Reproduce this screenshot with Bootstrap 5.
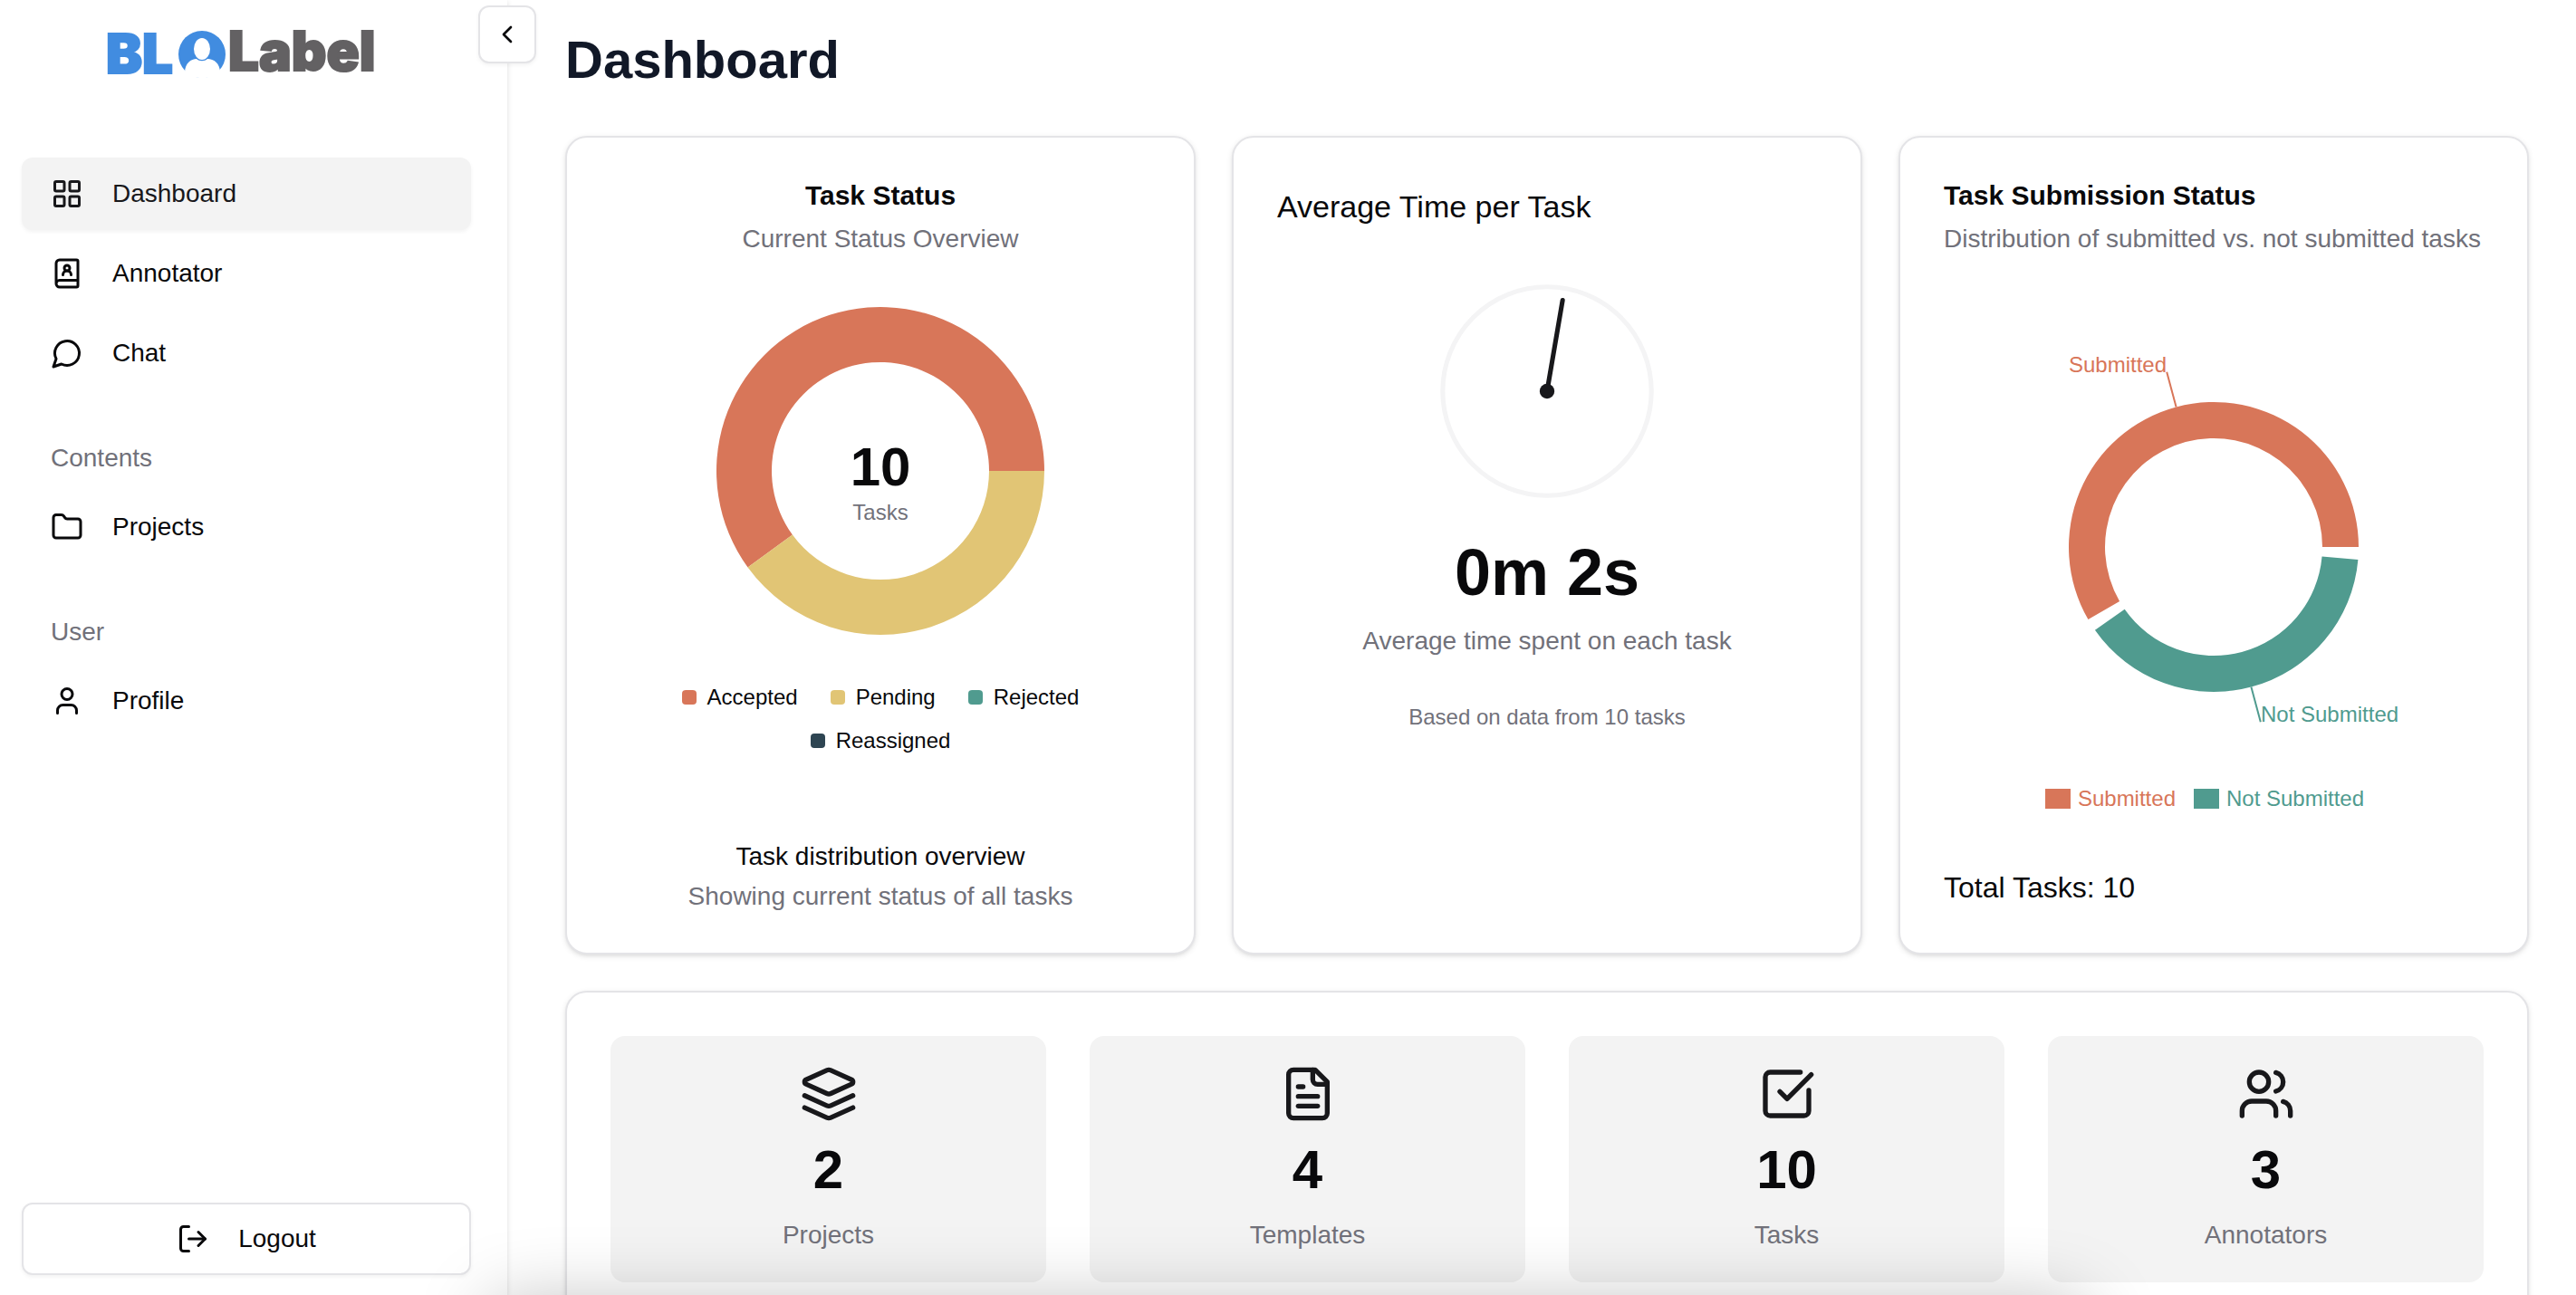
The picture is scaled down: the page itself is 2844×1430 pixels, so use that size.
<!DOCTYPE html>
<html lang="en">
<head>
<meta charset="utf-8">
<meta name="viewport" content="width=device-width, initial-scale=1">
<title>BLOLabel – Dashboard</title>
<link href="https://cdn.jsdelivr.net/npm/bootstrap@5.3.0/dist/css/bootstrap.min.css" rel="stylesheet">
<style>
  :root {
    --ink: #09090b;
    --muted: #71717a;
    --line: #e4e4e7;
    --soft: #f4f4f5;
    --coral: #d87659;
    --sand: #e1c575;
    --teal: #509b8f;
    --slate: #2e4552;
  }
  body {
    font-family: "Liberation Sans", Arial, sans-serif;
    font-size: 28px;
    line-height: 40px;
    color: var(--ink);
    background: #fff;
  }
  .icon {
    width: 36px; height: 36px; flex: none;
    fill: none; stroke: currentColor; stroke-width: 2;
    stroke-linecap: round; stroke-linejoin: round;
  }
  .icon-sm { width: 32px; height: 32px; }
  .icon-lg { width: 64px; height: 64px; color: #18181b; }
  .text-soft { color: var(--muted); }

  .sidebar {
    width: 560px;
    padding: 8px 40px 22px 24px;
    box-shadow: 0 2px 6px rgba(0, 0, 0, .14);
  }
  .logo { width: 320px; height: 104px; margin-bottom: 62px; }
  .logo svg { display: block; }
  .logo text { font: 900 60px Inter, "Liberation Sans", sans-serif; stroke-width: 2; }
  .side-nav { gap: 8px; }
  .side-link, .side-btn {
    height: 80px; gap: 32px; padding: 0 32px;
    color: var(--ink); border-radius: 12px;
  }
  .side-link:hover { color: var(--ink); background: var(--soft); }
  .side-link.active { background: #f3f3f3; box-shadow: 0 2px 4px rgba(0, 0, 0, .05); color: #18181b; }
  .side-title { padding: 0 32px; margin-top: 56px; margin-bottom: 16px; line-height: 40px; }
  .btn-line, .btn-line:hover {
    background: #fff; border: 2px solid var(--line);
    border-radius: 12px; box-shadow: 0 2px 4px rgba(0, 0, 0, .05);
    font-size: 28px; color: var(--ink);
  }
  .toggle-btn { width: 64px; height: 64px; top: 6px; right: -32px; z-index: 2; }

  .main-pane { padding: 30px 52px 0 64px; }
  .page-title { font-size: 58px; line-height: 72px; font-weight: 700; color: #111827; margin-bottom: 48px; }
  .cards { --bs-gutter-x: 40px; }
  .panel {
    border: 2px solid var(--line); border-radius: 24px; padding: 48px;
    box-shadow: 0 2px 6px rgba(0, 0, 0, .1), 0 2px 4px -2px rgba(0, 0, 0, .1);
    color: var(--ink);
  }
  .panel-title { font-size: 30px; line-height: 32px; font-weight: 700; margin-bottom: 12px; }
  .panel-head { font-size: 34px; line-height: 56px; font-weight: 400; margin-bottom: 48px; }
  .status-chart { width: 400px; height: 400px; margin-top: 36px; }
  .status-chart .total { font-size: 60px; font-weight: 700; fill: var(--ink); }
  .status-chart .unit { font-size: 24px; fill: var(--muted); }
  .key-list { margin-top: 34px; gap: 16px 36px; font-size: 24px; line-height: 32px; }
  .key-item { gap: 12px; }
  .swatch { width: 16px; height: 16px; border-radius: 4px; }
  .bg-coral { background: var(--coral); }
  .bg-sand { background: var(--sand); }
  .bg-teal { background: var(--teal); }
  .bg-slate { background: var(--slate); }
  .foot-line { line-height: 28px; }
  .clock { width: 256px; height: 256px; }
  .big-time { font-size: 72px; line-height: 80px; font-weight: 700; margin: 32px 0 16px; }
  .note { font-size: 24px; line-height: 32px; margin-top: 48px; }
  .submit-chart { width: 100%; height: 480px; margin-top: 80px; }
  .submit-chart text { font-size: 24px; }
  .submit-keys { font-size: 24px; line-height: 36px; margin: 20px 0 56px; }
  .submit-keys .key-item { gap: 8px; margin-right: 20px; }
  .block { width: 28px; height: 22px; }
  .text-coral { color: var(--coral); }
  .text-teal { color: var(--teal); }
  .total-line { font-size: 32px; line-height: 48px; }

  .stats { margin-top: 40px; }
  .stats .row { --bs-gutter-x: 48px; }
  .tile { background: #f3f3f3; border-radius: 16px; padding: 32px; }
  .tile-num { font-size: 60px; line-height: 72px; font-weight: 700; margin: 16px 0; }

  /* soft shade rising from the bottom edge of the window */
  .dock-shade {
    top: 100%; left: 19%; right: 19%; height: 120px; border-radius: 24px;
    box-shadow: 0 8px 80px rgba(0, 0, 0, .25); pointer-events: none; z-index: 5;
  }
</style>
</head>
<body>
<div class="d-flex vh-100 overflow-hidden position-relative">

  <aside class="sidebar d-flex flex-column flex-shrink-0 position-relative bg-white">
    <a href="#" class="d-block mx-auto logo" aria-label="BLOLabel">
      <svg width="320" height="104" viewBox="112 8 320 104">
        <text x="117" y="81" fill="#418ce0" stroke="#418ce0">BL</text>
        <circle cx="223" cy="60" r="26" fill="#418ce0"/>
        <path d="M204 80c0-10 7-15 13-15 3 3 9 3 12 0 7 0 14 5 14 15-5 8-34 8-39 0z" fill="#fff"/>
        <ellipse cx="223" cy="54" rx="9" ry="12" fill="#fff"/>
        <text x="252" y="78" fill="#636163" stroke="#636163">Label</text>
      </svg>
    </a>
    <button type="button" class="btn btn-line toggle-btn position-absolute d-flex align-items-center justify-content-center p-0" aria-label="Collapse sidebar">
      <svg class="icon icon-sm" viewBox="0 0 24 24"><path d="m15 18-6-6 6-6"/></svg>
    </button>

    <nav class="nav flex-column side-nav">
      <a href="#" class="side-link active d-flex align-items-center text-decoration-none" aria-current="page">
        <svg class="icon" viewBox="0 0 24 24"><rect width="7" height="7" x="3" y="3" rx="1"/><rect width="7" height="7" x="14" y="3" rx="1"/><rect width="7" height="7" x="14" y="14" rx="1"/><rect width="7" height="7" x="3" y="14" rx="1"/></svg>
        Dashboard
      </a>
      <a href="#" class="side-link d-flex align-items-center text-decoration-none">
        <svg class="icon" viewBox="0 0 24 24"><path d="M15 13a3 3 0 1 0-6 0"/><path d="M4 19.5v-15A2.5 2.5 0 0 1 6.5 2H19a1 1 0 0 1 1 1v18a1 1 0 0 1-1 1H6.5a1 1 0 0 1 0-5H20"/><circle cx="12" cy="8" r="2"/></svg>
        Annotator
      </a>
      <a href="#" class="side-link d-flex align-items-center text-decoration-none">
        <svg class="icon" viewBox="0 0 24 24"><path d="M7.9 20A9 9 0 1 0 4 16.1L2 22Z"/></svg>
        Chat
      </a>
    </nav>
    <div class="side-title text-soft">Contents</div>
    <nav class="nav flex-column side-nav">
      <a href="#" class="side-link d-flex align-items-center text-decoration-none">
        <svg class="icon" viewBox="0 0 24 24"><path d="M20 20a2 2 0 0 0 2-2V8a2 2 0 0 0-2-2h-7.9a2 2 0 0 1-1.69-.9L9.6 3.9A2 2 0 0 0 7.93 3H4a2 2 0 0 0-2 2v13a2 2 0 0 0 2 2Z"/></svg>
        Projects
      </a>
    </nav>
    <div class="side-title text-soft">User</div>
    <nav class="nav flex-column side-nav">
      <a href="#" class="side-link d-flex align-items-center text-decoration-none">
        <svg class="icon" viewBox="0 0 24 24"><path d="M19 21v-2a4 4 0 0 0-4-4H9a4 4 0 0 0-4 4v2"/><circle cx="12" cy="7" r="4"/></svg>
        Profile
      </a>
    </nav>
    <button type="button" class="btn btn-line side-btn d-flex align-items-center justify-content-center mt-auto">
      <svg class="icon" viewBox="0 0 24 24"><path d="M9 21H5a2 2 0 0 1-2-2V5a2 2 0 0 1 2-2h4"/><path d="m16 17 5-5-5-5"/><path d="M21 12H9"/></svg>
      Logout
    </button>
  </aside>

  <main class="main-pane flex-grow-1 overflow-hidden">
    <h1 class="page-title">Dashboard</h1>

    <div class="row cards">
      <div class="col-4">
        <section class="card panel h-100 d-flex flex-column align-items-center text-center">
          <h2 class="panel-title">Task Status</h2>
          <div class="text-soft">Current Status Overview</div>
          <svg class="status-chart" viewBox="0 0 400 400" role="img" aria-label="Task status chart">
            <path fill="#d87659" d="M381 200A181 181 0 1 0 53.570 306.390L102.918 270.534A120 120 0 1 1 320 200Z"/>
            <path fill="#e1c575" d="M53.570 306.390A181 181 0 0 0 381 200H320A120 120 0 0 1 102.918 270.534Z"/>
            <text class="total" x="200" y="216" text-anchor="middle">10</text>
            <text class="unit" x="200" y="254" text-anchor="middle">Tasks</text>
          </svg>
          <div class="key-list d-flex flex-wrap justify-content-center">
            <div class="key-item d-flex align-items-center"><span class="swatch bg-coral"></span>Accepted</div>
            <div class="key-item d-flex align-items-center"><span class="swatch bg-sand"></span>Pending</div>
            <div class="key-item d-flex align-items-center"><span class="swatch bg-teal"></span>Rejected</div>
            <div class="key-item d-flex align-items-center"><span class="swatch bg-slate"></span>Reassigned</div>
          </div>
          <div class="foot-line mt-auto mb-3">Task distribution overview</div>
          <div class="foot-line text-soft">Showing current status of all tasks</div>
        </section>
      </div>

      <div class="col-4">
        <section class="card panel h-100 d-flex flex-column align-items-center">
          <h2 class="panel-head align-self-start">Average Time per Task</h2>
          <svg class="clock" viewBox="0 0 100 100" role="img" aria-label="Clock">
            <circle cx="50" cy="50" r="45" fill="none" stroke="#f4f4f5" stroke-width="2"/>
            <line x1="50" y1="50" x2="56.700" y2="10.800" stroke="#18181b" stroke-width="2" stroke-linecap="round"/>
            <circle cx="50" cy="50" r="3.200" fill="#18181b"/>
          </svg>
          <div class="big-time">0m 2s</div>
          <div class="text-soft">Average time spent on each task</div>
          <div class="note text-soft">Based on data from 10 tasks</div>
        </section>
      </div>

      <div class="col-4">
        <section class="card panel h-100 d-flex flex-column">
          <h2 class="panel-title">Task Submission Status</h2>
          <div class="text-soft text-nowrap">Distribution of submitted vs. not submitted tasks</div>
          <svg class="submit-chart" viewBox="0 0 596 480" role="img" aria-label="Submission chart">
            <path fill="#d87659" d="M458 240A160 160 0 1 0 159.436 320L194.077 300A120 120 0 1 1 418 240Z"/>
            <path fill="#509b8f" d="M166.936 331.772A160 160 0 0 0 457.391 253.945L417.543 250.459A120 120 0 0 1 199.702 308.829Z"/>
            <path stroke="#d87659" stroke-width="2" d="M256.600 85.500 246.200 46.800"/>
            <path stroke="#509b8f" stroke-width="2" d="M339.400 394.500 349.800 433.200"/>
            <text x="246" y="47" text-anchor="end" fill="#d87659">Submitted</text>
            <text x="350" y="433" fill="#509b8f">Not Submitted</text>
          </svg>
          <div class="submit-keys d-flex justify-content-center">
            <div class="key-item d-flex align-items-center text-coral"><span class="block bg-coral"></span>Submitted</div>
            <div class="key-item d-flex align-items-center text-teal"><span class="block bg-teal"></span>Not Submitted</div>
          </div>
          <div class="total-line">Total Tasks: 10</div>
        </section>
      </div>
    </div>

    <section class="card panel stats">
      <div class="row text-center">
        <div class="col-3"><div class="tile">
          <svg class="icon icon-lg d-block mx-auto" viewBox="0 0 24 24"><path d="m12.830 2.180a2 2 0 0 0-1.660 0L2.600 6.080a1 1 0 0 0 0 1.830l8.580 3.910a2 2 0 0 0 1.660 0l8.580-3.900a1 1 0 0 0 0-1.830Z"/><path d="m22 17.650-9.170 4.160a2 2 0 0 1-1.660 0L2 17.650"/><path d="m22 12.650-9.170 4.160a2 2 0 0 1-1.660 0L2 12.650"/></svg>
          <div class="tile-num">2</div><div class="text-soft">Projects</div>
        </div></div>
        <div class="col-3"><div class="tile">
          <svg class="icon icon-lg d-block mx-auto" viewBox="0 0 24 24"><path d="M15 2H6a2 2 0 0 0-2 2v16a2 2 0 0 0 2 2h12a2 2 0 0 0 2-2V7Z"/><path d="M14 2v4a2 2 0 0 0 2 2h4"/><path d="M10 9H8"/><path d="M16 13H8"/><path d="M16 17H8"/></svg>
          <div class="tile-num">4</div><div class="text-soft">Templates</div>
        </div></div>
        <div class="col-3"><div class="tile">
          <svg class="icon icon-lg d-block mx-auto" viewBox="0 0 24 24"><path d="M21 10.500V19a2 2 0 0 1-2 2H5a2 2 0 0 1-2-2V5a2 2 0 0 1 2-2h12.500"/><path d="m9 11 3 3L22 4"/></svg>
          <div class="tile-num">10</div><div class="text-soft">Tasks</div>
        </div></div>
        <div class="col-3"><div class="tile">
          <svg class="icon icon-lg d-block mx-auto" viewBox="0 0 24 24"><path d="M16 21v-2a4 4 0 0 0-4-4H6a4 4 0 0 0-4 4v2"/><circle cx="9" cy="7" r="4"/><path d="M22 21v-2a4 4 0 0 0-3-3.870"/><path d="M16 3.130a4 4 0 0 1 0 7.750"/></svg>
          <div class="tile-num">3</div><div class="text-soft">Annotators</div>
        </div></div>
      </div>
    </section>
  </main>

  <div class="dock-shade position-absolute"></div>
</div>
<script src="https://cdn.jsdelivr.net/npm/bootstrap@5.3.0/dist/js/bootstrap.bundle.min.js"></script>
</body>
</html>
